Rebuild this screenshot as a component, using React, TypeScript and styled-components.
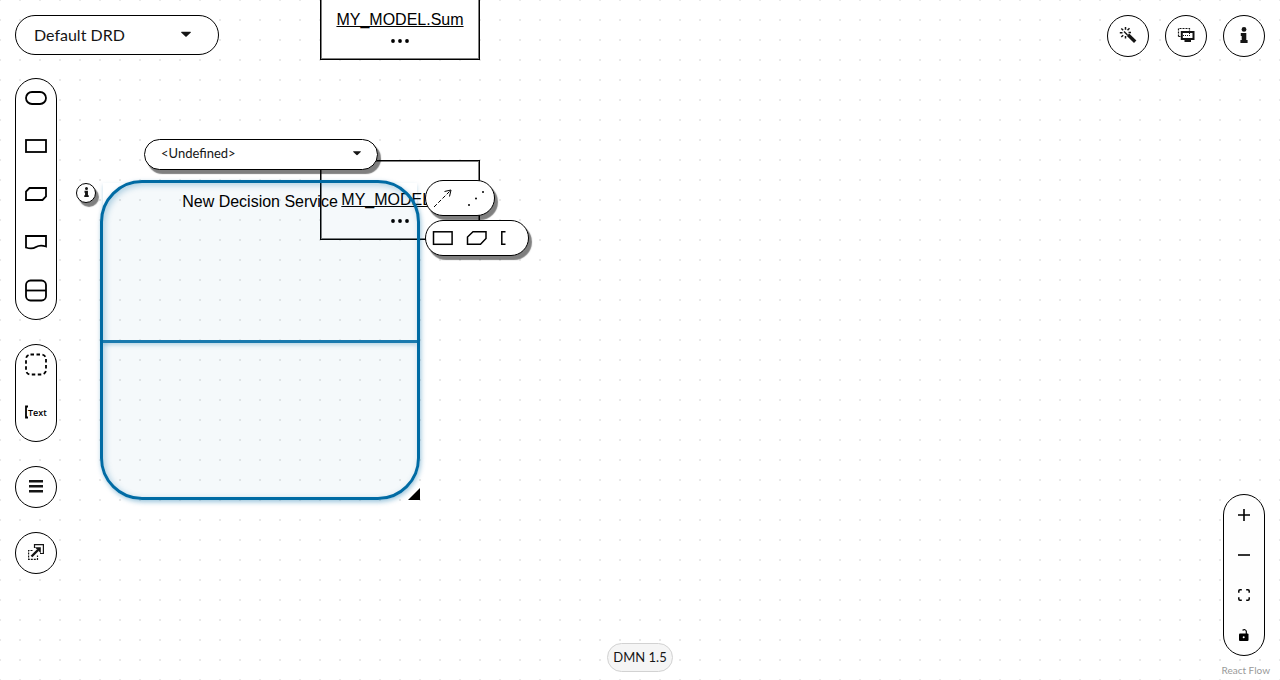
import React from "react";
import styled, { createGlobalStyle } from "styled-components";

const Global = createGlobalStyle`
  * { box-sizing: border-box; }
  body { margin: 0; background: #fff; color: #151515; font-family: Lato, "Open Sans", sans-serif; }
  button { font: inherit; color: inherit; }
`;

const Page = styled.main`
  position: relative;
  min-height: 100vh;
  overflow: hidden;
  display: flex;
  flex-direction: column;
  background-color: #fff;
  background-image: radial-gradient(circle at center, #e9e9e9 1px, transparent 1px);
  background-size: 20px 20px;
  background-position: -10px -10px;
`;

const Diagram = styled.section`
  position: absolute;
  inset: 0;
`;

const Header = styled.header`
  position: relative;
  display: flex;
  justify-content: space-between;
  align-items: flex-start;
  padding: 15px 15px 0;
  pointer-events: none;
`;

const Body = styled.div`
  position: relative;
  flex: 1;
  display: grid;
  grid-template-columns: 1fr auto 1fr;
  align-items: end;
  padding: 21px 15px 0;
  pointer-events: none;
`;

const DrdButton = styled.button`
  display: flex;
  align-items: center;
  justify-content: space-between;
  width: 204px;
  height: 40px;
  padding: 0 27px 2px 18px;
  border: 1px solid #000;
  border-radius: 20px;
  background: #fff;
  font-size: 16px;
  pointer-events: auto;
`;

const HeaderActions = styled.div`
  display: flex;
  gap: 16px;
`;

const RoundButton = styled.button`
  display: flex;
  align-items: center;
  justify-content: center;
  width: 42px;
  height: 42px;
  padding: 0 0 2px;
  border: 1px solid #000;
  border-radius: 50%;
  background: #fff;
  pointer-events: auto;
`;

const SideColumn = styled.aside`
  align-self: start;
  display: flex;
  flex-direction: column;
  align-items: flex-start;
  gap: 24px;
`;

const Palette = styled.div`
  display: flex;
  flex-direction: column;
  gap: 10px;
  width: 42px;
  padding-bottom: 10px;
  border: 1px solid #000;
  border-radius: 21px;
  background: #fff;
  pointer-events: auto;
`;

const PaletteItem = styled.button`
  display: flex;
  align-items: center;
  justify-content: center;
  height: 38px;
  padding: 0;
  border: 0;
  background: none;
`;

const Controls = styled.div`
  justify-self: end;
  display: flex;
  flex-direction: column;
  width: 42px;
  margin-bottom: 24px;
  border: 1px solid #000;
  border-radius: 21px;
  background: #fefefe;
  pointer-events: auto;
`;

const ControlButton = styled.button`
  display: flex;
  align-items: center;
  justify-content: center;
  height: 40px;
  padding: 0;
  border: 0;
  background: none;
`;

const VersionLabel = styled.span`
  margin-bottom: 8px;
  padding: 0 5px;
  border: 1px solid #d2d2d2;
  border-radius: 15px;
  background: #f5f5f5;
  font-size: 13px;
  line-height: 27px;
`;

const Attribution = styled.a`
  position: absolute;
  right: 10px;
  bottom: 3px;
  color: #999;
  font-size: 10px;
  line-height: 14px;
  text-decoration: none;
`;

const InputNode = styled.article<{ $top: number }>`
  position: absolute;
  left: 320px;
  top: ${(p) => p.$top}px;
  width: 160px;
  height: 80px;
  padding-top: 30px;
  border: 1px solid #000;
  outline: 1px solid rgba(0, 0, 0, 0.5);
  outline-offset: -2px;
  background: #fff;
  font: 16px/18px "Liberation Sans", sans-serif;
  text-align: center;
  white-space: nowrap;
`;

const NodeLink = styled.a`
  display: block;
  color: #000;
  text-decoration: underline;
`;

const Ellipsis = styled.svg`
  display: block;
  margin: 10px auto 0;
`;

const ServiceNode = styled.article`
  position: absolute;
  left: 100px;
  top: 180px;
  width: 320px;
  height: 320px;
  border: 3px solid #006ba4;
  border-radius: 42px;
  background: rgba(0, 107, 164, 0.04);
  box-shadow: 1px 2px 5px rgba(0, 107, 164, 0.4), inset 2px 2px 6px rgba(0, 107, 164, 0.3);
`;

const ServiceHalf = styled.div`
  height: 160px;
  padding-top: 10px;
  border-bottom: 3px solid #1a7aae;
  box-shadow: 0 2px 4px rgba(0, 107, 164, 0.25);
  color: #000;
  font: 16px/18px "Liberation Sans", sans-serif;
  text-align: center;
`;

const floating = `
  position: absolute;
  display: flex;
  align-items: center;
  border: 1px solid #000;
  background: #fff;
  box-shadow: 3px 4px 1px rgba(0, 0, 0, 0.5);
`;

const TypeButton = styled.button`
  ${floating}
  left: 144px;
  top: 139px;
  justify-content: space-between;
  width: 234px;
  height: 31px;
  padding: 0 16px 3px;
  border-radius: 16px;
  font-size: 13px;
`;

const InfoButton = styled.button`
  ${floating}
  left: 76px;
  top: 183px;
  justify-content: center;
  width: 20px;
  height: 20px;
  padding: 0 0 2px;
  border-radius: 50%;
`;

const Toolbar = styled.div<{ $top: number; $width: number }>`
  ${floating}
  left: 425px;
  top: ${(p) => p.$top}px;
  width: ${(p) => p.$width}px;
  height: 36px;
  gap: 12px;
  padding: 0 6px;
  border-radius: 18px;
`;

const ToolButton = styled.button`
  display: flex;
  padding: 0;
  border: 0;
  background: none;
`;

const ResizeHandle = styled.svg`
  position: absolute;
  left: 408px;
  top: 488px;
`;

const Caret = ({ width = 10 }: { width?: number }) => (
  <svg width={width} height="6" viewBox="0 0 10 6" aria-hidden="true">
    <path d="M.6 .8h8.800q.9.3.2 1L5.600 5.600q-.6.4-1.200 0L.4 1.800Q-.3 1.100.6 .8z" fill="#151515" />
  </svg>
);

const InfoIcon = ({ height }: { height: number }) => (
  <svg width={height / 2} height={height} viewBox="0 0 8 16" fill="#151515" aria-hidden="true">
    <circle cx="4" cy="2.400" r="2.400" />
    <path d="M.8 6h5.500v7H7.600V16H.4v-3H1.700V9H.8z" />
  </svg>
);

const Dots = () => (
  <Ellipsis width="18" height="4" viewBox="0 0 18 4" aria-hidden="true">
    <circle cx="2" cy="2" r="1.900" />
    <circle cx="9" cy="2" r="1.900" />
    <circle cx="16" cy="2" r="1.900" />
  </Ellipsis>
);

const Shape = ({ children }: { children: React.ReactNode }) => (
  <svg width="24" height="24" viewBox="0 0 24 24" fill="none" stroke="#000" strokeWidth="1.800" aria-hidden="true">
    {children}
  </svg>
);

export default function App() {
  return (
    <Page>
      <Global />
      <Diagram aria-label="Diagram">
        <InputNode $top={-20}>
          <NodeLink href="#sum">MY_MODEL.Sum</NodeLink>
          <Dots />
        </InputNode>
        <InputNode $top={160}>
          <NodeLink href="#sin">MY_MODEL.Sin</NodeLink>
          <Dots />
        </InputNode>
        <ServiceNode>
          <ServiceHalf>New Decision Service</ServiceHalf>
        </ServiceNode>
        <ResizeHandle width="12" height="12" viewBox="0 0 12 12" aria-hidden="true">
          <path d="M12 0v12H0z" />
        </ResizeHandle>
        <TypeButton>
          <span>&lt;Undefined&gt;</span>
          <Caret width={8} />
        </TypeButton>
        <InfoButton aria-label="Node properties">
          <InfoIcon height={10} />
        </InfoButton>
        <Toolbar $top={180} $width={70}>
          <ToolButton aria-label="Information requirement">
            <svg width="22" height="22" viewBox="0 0 22 22" fill="none" stroke="#000" strokeWidth="1">
              <path d="M2 20L19 3" strokeDasharray="4 2" />
              <path d="M12.500 4.500L19 3L17.500 9.500" />
            </svg>
          </ToolButton>
          <ToolButton aria-label="Association">
            <svg width="20" height="20" viewBox="0 0 20 20">
              <circle cx="3" cy="17" r="1" />
              <circle cx="10" cy="10.500" r="1" />
              <circle cx="17" cy="4" r="1" />
            </svg>
          </ToolButton>
        </Toolbar>
        <Toolbar $top={220} $width={104}>
          <ToolButton aria-label="Add decision">
            <svg width="22" height="16" viewBox="0 0 22 16" fill="none" stroke="#000" strokeWidth="1.500">
              <rect x="1.500" y="1.800" width="18.600" height="12.500" />
            </svg>
          </ToolButton>
          <ToolButton aria-label="Add knowledge model">
            <svg width="22" height="16" viewBox="0 0 22 16" fill="none" stroke="#000" strokeWidth="1.500">
              <path d="M7 1.800H20V8.500L14.500 14.300H1.500V7z" />
            </svg>
          </ToolButton>
          <ToolButton aria-label="Add text annotation">
            <svg width="8" height="16" viewBox="0 0 8 16" fill="none" stroke="#000" strokeWidth="1.500">
              <path d="M5.500 1.800H1.800V14.300H5.500" />
            </svg>
          </ToolButton>
        </Toolbar>
      </Diagram>

      <Header>
        <DrdButton>
          <span>Default DRD</span>
          <Caret />
        </DrdButton>
        <HeaderActions>
          <RoundButton aria-label="Autolayout">
            <svg width="18" height="18" viewBox="0 0 18 18" stroke="#151515" fill="none">
              <path d="M9 8.800L16.200 15.700" strokeWidth="3.400" />
              <path d="M5 5.500L8.500 9" strokeWidth="1.400" />
              <path d="M6.500 1v2.700M2.300 2.500L4.200 4.200M.8 6.800h2.700M2.300 11L4.200 9.300M6.500 10v2.500M8.500 4.300L10.500 2.300M9.500 6.500H12" strokeWidth="1.500" />
            </svg>
          </RoundButton>
          <RoundButton aria-label="Overlays">
            <svg width="18" height="16" viewBox="0 0 18 16" fill="none" stroke="#151515">
              <path d="M1.500 9.500V1.500H12.500V4M1.500 9.500H4" strokeDasharray="2 1" strokeWidth="1.200" />
              <rect x="4.800" y="5" width="11.700" height="7" strokeWidth="2" />
              <path d="M6 8.500h7M12.500 6v3" strokeDasharray="1 1" />
              <path d="M7.500 14h6.500" strokeWidth="2" />
            </svg>
          </RoundButton>
          <RoundButton aria-label="Properties">
            <InfoIcon height={16} />
          </RoundButton>
        </HeaderActions>
      </Header>

      <Body>
        <SideColumn>
          <Palette>
            <PaletteItem aria-label="Input data"><Shape><rect x="2" y="6" width="20" height="12" rx="6" /></Shape></PaletteItem>
            <PaletteItem aria-label="Decision"><Shape><rect x="2" y="6" width="20" height="12" /></Shape></PaletteItem>
            <PaletteItem aria-label="Knowledge model"><Shape><path d="M5.500 6H22V14.500L18.500 18H2V9.500z" /></Shape></PaletteItem>
            <PaletteItem aria-label="Knowledge source"><Shape><path d="M2 6H22V16.500Q16 14.500 12 17T2 17.500z" /></Shape></PaletteItem>
            <PaletteItem aria-label="Decision service"><Shape><rect x="2" y="2.500" width="20" height="20" rx="4.500" /><path d="M2 12.500h20" /></Shape></PaletteItem>
          </Palette>
          <Palette>
            <PaletteItem aria-label="Group">
              <Shape><rect x="2" y="2.500" width="20" height="20" rx="4.500" strokeDasharray="3.500 2.500" /></Shape>
            </PaletteItem>
            <PaletteItem aria-label="Text annotation">
              <svg width="24" height="16" viewBox="0 0 24 16" aria-hidden="true">
                <path d="M4 2.500H2V13.500H4" fill="none" stroke="#000" strokeWidth="1.800" />
                <text x="4" y="11.500" fontFamily="Open Sans, sans-serif" fontSize="9" fontWeight="600">Text</text>
              </svg>
            </PaletteItem>
          </Palette>
          <RoundButton aria-label="Nodes list">
            <svg width="14" height="14" viewBox="0 0 14 14" stroke="#151515" strokeWidth="2.400"><path d="M0 2.200h14M0 7.200h14M0 12.200h14" /></svg>
          </RoundButton>
          <RoundButton aria-label="External nodes">
            <svg width="16" height="16" viewBox="0 0 16 16" fill="none" stroke="#151515">
              <path d="M6.500 4V.6H15.400V9.500H12" strokeWidth="1.200" />
              <path d="M4.500 6.500H.6V15.400H9.500V11.500" strokeDasharray="2 1" strokeWidth="1.200" />
              <path d="M3.500 12.500L10 6" strokeWidth="2.400" />
              <path d="M6.800 3.200H12.800V9.200z" fill="#151515" stroke="none" />
            </svg>
          </RoundButton>
        </SideColumn>
        <VersionLabel>DMN 1.5</VersionLabel>
        <Controls>
          <ControlButton aria-label="Zoom in">
            <svg width="12" height="12" viewBox="0 0 12 12" stroke="#000" strokeWidth="1.600"><path d="M0 6h12M6 0v12" /></svg>
          </ControlButton>
          <ControlButton aria-label="Zoom out">
            <svg width="12" height="12" viewBox="0 0 12 12" stroke="#000" strokeWidth="1.600"><path d="M0 6h12" /></svg>
          </ControlButton>
          <ControlButton aria-label="Fit view">
            <svg width="12" height="12" viewBox="0 0 12 12" fill="none" stroke="#000" strokeWidth="1.500">
              <path d="M.8 3.800V2Q.8.8 2 .8H3.800M8.200.8H10Q11.200.8 11.200 2V3.800M11.200 8.200V10Q11.200 11.200 10 11.200H8.200M3.800 11.200H2Q.8 11.200.8 10V8.200" />
            </svg>
          </ControlButton>
          <ControlButton aria-label="Toggle lock">
            <svg width="10" height="12" viewBox="0 0 10 12">
              <rect x="0" y="4.500" width="9.500" height="7.500" rx="1" />
              <path d="M3.500 1.200Q6.500-.2 7.300 2.200V5" fill="none" stroke="#000" strokeWidth="1.200" />
              <circle cx="4.700" cy="8.200" r="1" fill="#fff" />
            </svg>
          </ControlButton>
        </Controls>
      </Body>
      <Attribution href="#react-flow">React Flow</Attribution>
    </Page>
  );
}
